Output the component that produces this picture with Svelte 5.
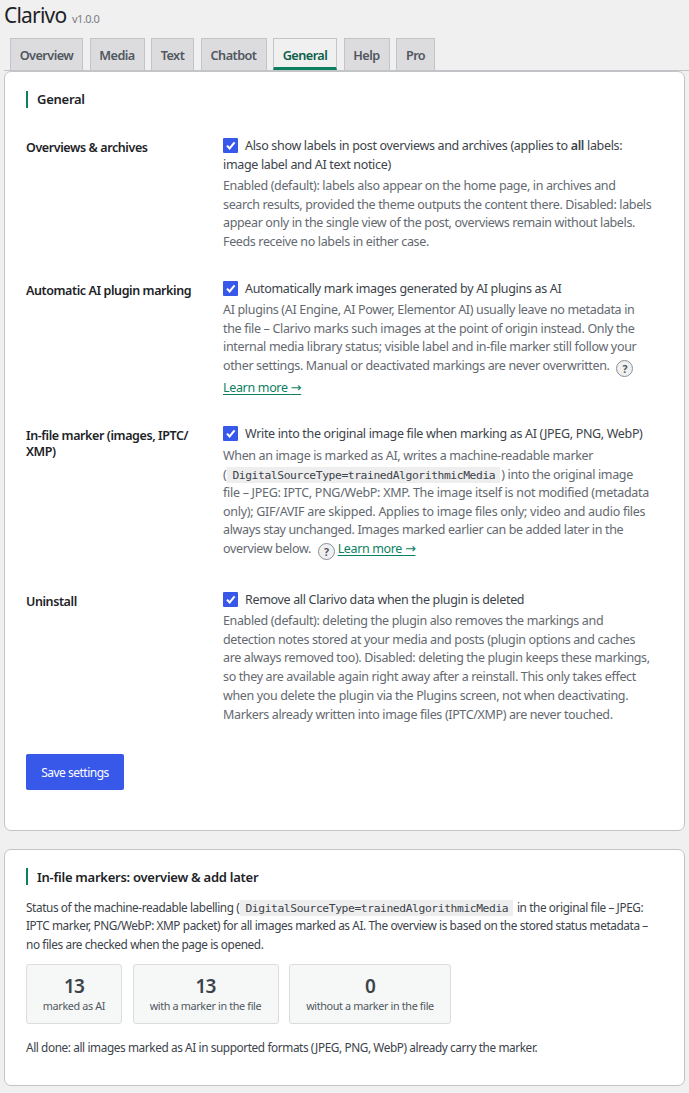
<script lang="ts">
	let activeTab = $state('General');

	const tabs = [
		{ name: 'Overview', width: 73 },
		{ name: 'Media', width: 55 },
		{ name: 'Text', width: 43 },
		{ name: 'Chatbot', width: 66 },
		{ name: 'General', width: 64 },
		{ name: 'Help', width: 46 },
		{ name: 'Pro', width: 39 }
	];

	const stats = [
		{ value: 13, label: 'marked as AI', width: 96 },
		{ value: 13, label: 'with a marker in the file', width: 146 },
		{ value: 0, label: 'without a marker in the file', width: 162 }
	];
</script>

{#snippet check()}
	<span class="checkbox">
		<svg viewBox="0 0 15 15" width="15" height="15">
			<path d="M4 7.6 6.6 10.4 11.6 4.4" fill="none" stroke="#fff" stroke-width="2.1" />
		</svg>
	</span>
{/snippet}

<div class="wrap">
	<h1>Clarivo <span class="version">v1.0.0</span></h1>

	<nav>
		{#each tabs as tab}
			<button
				class="tab"
				class:active={tab.name === activeTab}
				style="width: {tab.width}px"
				onclick={() => (activeTab = tab.name)}>{tab.name}</button>
		{/each}
	</nav>

	<section class="card settings">
		<h2>General</h2>

		<div class="row first">
			<h3>Overviews &amp; archives</h3>
			<div class="field">
				<label>{@render check()}Also show labels in post overviews and archives (applies to <b>all</b> labels:<br />image label and AI text notice)</label>
				<p class="description">
					Enabled (default): labels also appear on the home page, in archives and<br />
					search results, provided the theme outputs the content there. Disabled: labels<br />
					appear only in the single view of the post, overviews remain without labels.<br />
					Feeds receive no labels in either case.
				</p>
			</div>
		</div>

		<div class="row second">
			<h3>Automatic AI plugin marking</h3>
			<div class="field">
				<label>{@render check()}Automatically mark images generated by AI plugins as AI</label>
				<p class="description">
					<span class="wide">AI plugins (AI Engine, AI Power, Elementor AI) usually leave no metadata in</span><br />
					<span class="wide">the file – Clarivo marks such images at the point of origin instead. Only the</span><br />
					<span class="wide">internal media library status; visible label and in-file marker still follow your</span><br />
					other settings. Manual or deactivated markings are never overwritten.
					<span class="help">?</span>
				</p>
				<a class="own-line" href="#learn">Learn more <span class="arrow">→</span></a>
			</div>
		</div>

		<div class="row third">
			<h3>In-file marker (images, IPTC/<br />XMP)</h3>
			<div class="field">
				<label>{@render check()}Write into the original image file when marking as AI (JPEG, PNG, WebP)</label>
				<p class="description">
					When an image is marked as AI, writes a machine-readable marker<br />
					(<code>DigitalSourceType=trainedAlgorithmicMedia</code>) into the original image<br />
					<span class="wider">file – JPEG: IPTC, PNG/WebP: XMP. The image itself is not modified (metadata</span><br />
					<span class="wider">only); GIF/AVIF are skipped. Applies to image files only; video and audio files</span><br />
					always stay unchanged. Images marked earlier can be added later in the<br />
					overview below. <span class="help">?</span>
					<a href="#learn">Learn more <span class="arrow">→</span></a>
				</p>
			</div>
		</div>

		<div class="row fourth">
			<h3>Uninstall</h3>
			<div class="field">
				<label>{@render check()}Remove all Clarivo data when the plugin is deleted</label>
				<p class="description">
					Enabled (default): deleting the plugin also removes the markings and<br />
					detection notes stored at your media and posts (plugin options and caches<br />
					are always removed too). Disabled: deleting the plugin keeps these markings,<br />
					so they are available again right away after a reinstall. This only takes effect<br />
					when you delete the plugin via the Plugins screen, not when deactivating.<br />
					Markers already written into image files (IPTC/XMP) are never touched.
				</p>
			</div>
		</div>

		<button class="save">Save settings</button>
	</section>

	<section class="card overview">
		<h2>In-file markers: overview &amp; add later</h2>
		<p class="status">
			Status of the machine-readable labelling (<code>DigitalSourceType=trainedAlgorithmicMedia</code> in the original file – JPEG:<br />
			IPTC marker, PNG/WebP: XMP packet) for all images marked as AI. The overview is based on the stored status metadata –<br />
			no files are checked when the page is opened.
		</p>
		<div class="stats">
			{#each stats as stat}
				<div class="stat" style="width: {stat.width}px">
					<strong>{stat.value}</strong>
					<span>{stat.label}</span>
				</div>
			{/each}
		</div>
		<p class="done">All done: all images marked as AI in supported formats (JPEG, PNG, WebP) already carry the marker.</p>
	</section>
</div>

<style>
	:global(body) {
		background: #f0f0f0;
	}

	.wrap {
		box-sizing: border-box;
		width: 689px;
		height: 1093px;
		padding-left: 4px;
		overflow: hidden;
		font-family: 'Noto Sans', sans-serif;
		font-size: 12.5px;
		letter-spacing: -0.33px;
		color: #3c434a;
		white-space: nowrap;
	}

	h1, h2, h3, p {
		margin: 0;
	}

	h1 {
		height: 38px;
		font-size: 21px;
		font-weight: 400;
		line-height: 30px;
		letter-spacing: -0.8px;
		color: #1d2327;
	}

	.version {
		margin-left: 1px;
		font-size: 11px;
		letter-spacing: -0.5px;
		color: #787c82;
	}

	nav {
		display: flex;
		gap: 6.5px;
		height: 32px;
		padding-left: 6px;
		border-bottom: 1px solid #c3c4c7;
	}

	.tab {
		box-sizing: border-box;
		flex: none;
		height: 32px;
		padding: 0;
		border: 1px solid #c3c4c7;
		border-bottom: none;
		background: #dcdcde;
		font: 600 12.7px/33px 'Noto Sans', sans-serif;
		letter-spacing: -0.55px;
		color: #50575e;
	}

	.tab.active {
		border-bottom: 3px solid #0b7f60;
		background: #f0f0f0;
		color: #0b5f4a;
	}

	.card {
		box-sizing: border-box;
		width: 681px;
		padding: 0 21px;
		border: 1px solid #c3c4c7;
		border-radius: 7px;
		background: #fff;
	}

	.settings {
		height: 760px;
		padding-top: 19px;
	}

	h2 {
		height: 17px;
		padding-left: 9px;
		border-left: 2px solid #0b7f60;
		font-size: 13px;
		font-weight: 600;
		line-height: 17px;
		letter-spacing: -0.26px;
		color: #1d2327;
	}

	.row {
		display: grid;
		grid-template-columns: 197px 1fr;
	}

	.first {
		height: 143px;
		margin-top: 28px;
	}

	.second {
		height: 145px;
	}

	.third {
		height: 166px;
	}

	.fourth {
		height: 164px;
	}

	h3 {
		padding-top: 4px;
		font-size: 12.5px;
		font-weight: 600;
		line-height: 16px;
		letter-spacing: -0.41px;
		color: #1d2327;
	}

	label {
		display: block;
		line-height: 19px;
	}

	.checkbox {
		display: inline-block;
		width: 15px;
		height: 15px;
		margin-right: 7px;
		border-radius: 1px;
		background: #3858e9;
		vertical-align: -3px;
	}

	.checkbox svg {
		display: block;
	}

	b {
		font-weight: 600;
	}

	.description {
		margin-top: 3px;
		line-height: 18.7px;
		letter-spacing: -0.36px;
		color: #646970;
	}

	.third .description {
		margin-top: 4px;
		line-height: 18.6px;
	}

	.wide {
		letter-spacing: -0.33px;
	}

	.wider {
		letter-spacing: -0.28px;
	}

	.help {
		display: inline-block;
		box-sizing: border-box;
		width: 17px;
		height: 17px;
		margin: -2px 0 -4px 4px;
		border: 1px solid #8c8f94;
		border-radius: 50%;
		background: #f0f0f1;
		font-size: 10.5px;
		font-weight: 700;
		line-height: 16px;
		text-align: center;
		vertical-align: -3px;
		color: #50575e;
	}

	a {
		color: #0b7f60;
		text-underline-offset: 2px;
	}

	.own-line {
		display: block;
		width: max-content;
		margin-top: 3px;
		line-height: 18px;
	}

	.arrow {
		font-family: 'DejaVu Sans', sans-serif;
		font-size: 13px;
		line-height: 1;
	}

	code {
		padding: 2px 5px 1px;
		margin: 0 1px;
		background: #eeeeee;
		font: 11.3px 'DejaVu Sans Mono', monospace;
		letter-spacing: -0.39px;
		color: #3c434a;
	}

	.save {
		width: 98px;
		height: 36px;
		padding: 1px 0 0;
		border: none;
		border-radius: 2px;
		background: #3858e9;
		font: 12px 'Noto Sans', sans-serif;
		letter-spacing: -0.5px;
		color: #fff;
	}

	.overview {
		height: 237px;
		margin-top: 18px;
		padding-top: 18px;
	}

	.overview h2 {
		line-height: 19px;
	}

	.status {
		margin-top: 13px;
		font-size: 11.8px;
		line-height: 18.3px;
		letter-spacing: -0.4px;
	}

	.stats {
		display: flex;
		gap: 10.5px;
		margin-top: 11px;
	}

	.stat {
		display: flex;
		flex: none;
		flex-direction: column;
		box-sizing: border-box;
		height: 60px;
		padding-top: 10px;
		border: 1px solid #dcdcde;
		border-radius: 3px;
		background: #f6f7f7;
		text-align: center;
	}

	.stat strong {
		font-size: 19px;
		font-weight: 600;
		line-height: 22px;
		letter-spacing: -0.9px;
	}

	.stat span {
		font-size: 10.8px;
		line-height: 17px;
		letter-spacing: -0.35px;
		color: #50575e;
	}

	.done {
		margin-top: 14px;
		font-size: 11.8px;
		line-height: 18px;
		letter-spacing: -0.4px;
	}
</style>
